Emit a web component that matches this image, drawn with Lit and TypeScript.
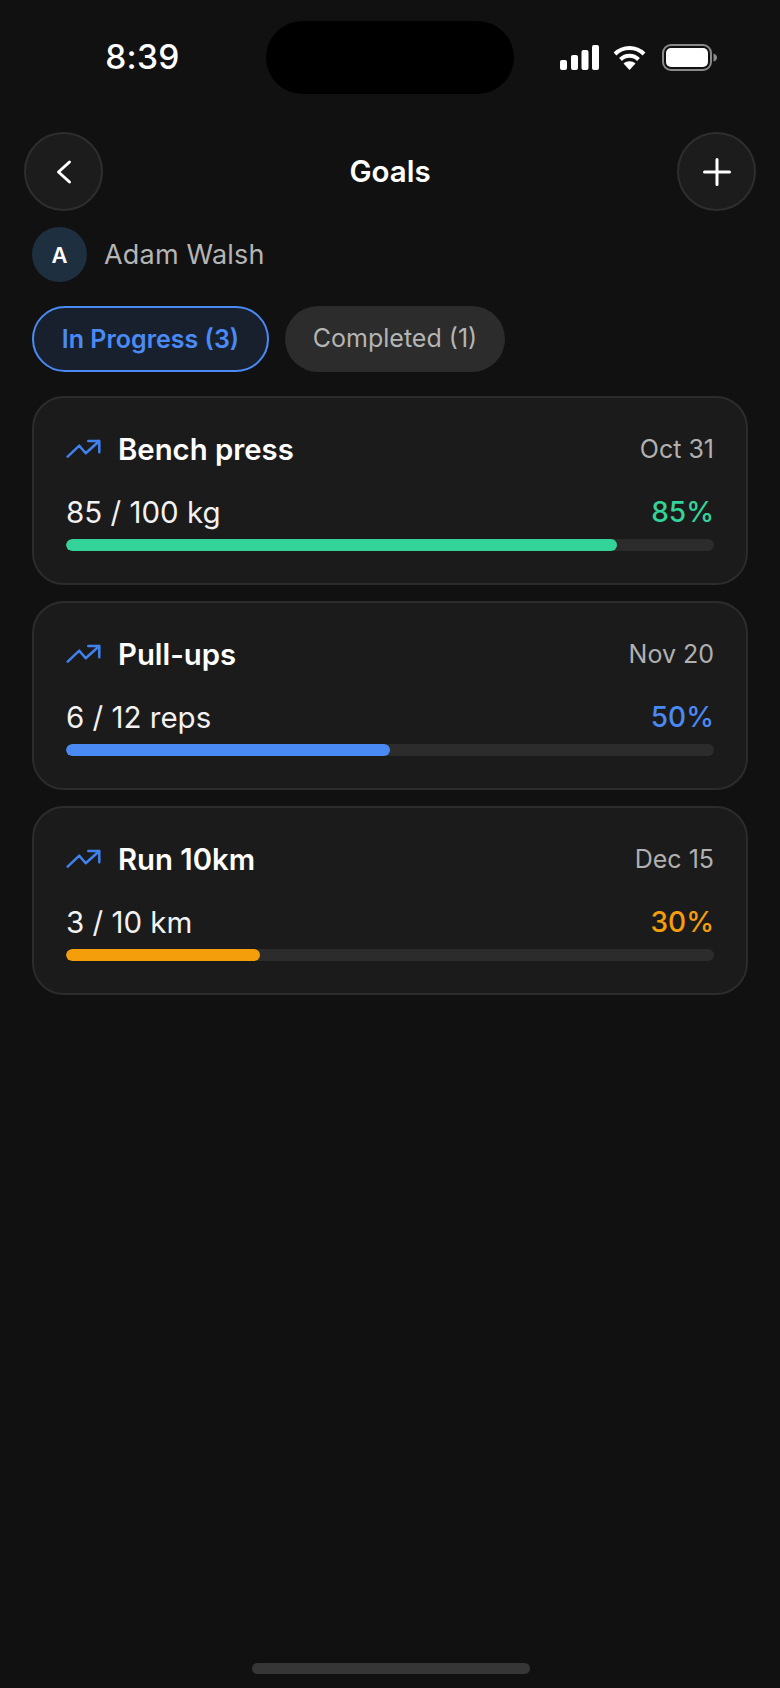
import { LitElement, html, css, svg } from "lit";
import { customElement } from "lit/decorators.js";

const goals = [
  { name: "Bench press", date: "Oct 31", value: "85 / 100 kg", pct: 85, color: "#34d399" },
  { name: "Pull-ups", date: "Nov 20", value: "6 / 12 reps", pct: 50, color: "#4a8af4" },
  { name: "Run 10km", date: "Dec 15", value: "3 / 10 km", pct: 30, color: "#f59e0b" },
];

const trend = svg`<path d="M1.7 19.7 L13.3 8.7 L19.7 16.3 L33.3 4 M22.3 4 H33.3 V15.3" fill="none" stroke="#3f82ee" stroke-width="2.5" stroke-linecap="round" stroke-linejoin="round"/>`;

@customElement("app-root")
export class AppRoot extends LitElement {
  static styles = css`
    :host { display: block; width: 780px; height: 1688px; background: #111111; color: #fff; font-family: Inter, "Liberation Sans", sans-serif; overflow: hidden; position: relative; }
    .status { height: 132px; display: grid; grid-template-columns: 266px 248px 266px; align-items: start; padding-top: 21px; box-sizing: border-box; }
    .time { font-size: 33.5px; font-weight: 500; line-height: 73px; text-align: center; padding-left: 19px; box-sizing: border-box; letter-spacing: 0.3px; }
    .island { height: 73px; background: #000; border-radius: 37px; }
    .sys { display: flex; align-items: center; height: 73px; padding-left: 46px; gap: 14px; }
    .sys svg { display: block; }
    .sys svg:last-child { margin-left: 2px; }
    .header { display: flex; justify-content: space-between; align-items: center; padding: 0 24px; }
    .round { width: 79px; height: 79px; box-sizing: border-box; border-radius: 50%; background: #1c1c1c; border: 2px solid #2e2e2e; display: flex; align-items: center; justify-content: center; }
    h1 { margin: 0 0 2px; font-size: 29.5px; font-weight: 600; }
    .user { display: flex; align-items: center; gap: 17px; padding: 16px 32px 0; }
    .avatar { width: 55px; height: 55px; border-radius: 50%; background: #1e2f40; display: flex; align-items: center; justify-content: center; font-size: 22px; font-weight: 600; }
    .uname { font-size: 27px; color: #b5b5b5; letter-spacing: 0.2px; }
    .tabs { display: flex; gap: 16px; padding: 24px 32px; }
    .tab { height: 66px; box-sizing: border-box; border-radius: 33px; display: flex; align-items: center; justify-content: center; font-size: 25px; }
    .tab.on { width: 237px; background: #18202e; border: 2px solid #4a8af4; color: #4a8af4; font-weight: 600; }
    .tab.off { width: 220px; background: #2c2c2c; color: #b5b5b5; padding-bottom: 3px; }
    .list { display: flex; flex-direction: column; gap: 16px; padding: 0 32px; }
    .card { height: 189px; box-sizing: border-box; background: #1b1b1b; border: 2px solid #2c2c2c; border-radius: 32px; padding: 32px 32px 0; display: flex; flex-direction: column; }
    .row { display: flex; justify-content: space-between; align-items: center; }
    .top { height: 38px; }
    .left { display: flex; align-items: center; gap: 17px; }
    .left svg { display: block; }
    .name { font-size: 29.3px; font-weight: 600; }
    .date { font-size: 25px; color: #b0b0b0; }
    .mid { height: 40px; margin-top: 24px; }
    .val { font-size: 29.5px; color: #f2f2f2; }
    .pct { font-size: 28px; font-weight: 500; }
    .track { height: 12px; margin-top: 7px; border-radius: 6px; background: #2c2c2c; overflow: hidden; }
    .fill { height: 100%; border-radius: 6px; }
    .home { position: absolute; left: 252px; top: 1663px; width: 278px; height: 11px; border-radius: 6px; background: #363636; }
  `;

  render() {
    return html`
      <div class="status">
        <div class="time">8:39</div>
        <div class="island"></div>
        <div class="sys">
          <svg width="39" height="25" viewBox="0 0 39 25" fill="#fff">
            <rect x="0" y="15" width="7" height="10" rx="2"/>
            <rect x="11" y="10" width="7" height="15" rx="2"/>
            <rect x="21.5" y="5" width="7" height="20" rx="2"/>
            <rect x="32" y="0" width="7" height="25" rx="2"/>
          </svg>
          <svg width="33" height="25" viewBox="0 0 33 25" fill="none" stroke="#fff" stroke-width="4">
            <path d="M2 9 C10 1 23 1 31 9"/>
            <path d="M7.5 14.5 C12.5 9.5 20.5 9.5 25.5 14.5"/>
            <path d="M16.5 25 L10.5 18.5 C14 15.5 19 15.5 22.5 18.5 Z" fill="#fff" stroke="none"/>
          </svg>
          <svg width="55" height="27" viewBox="0 0 55 27" fill="none">
            <rect x="1" y="1" width="48" height="25" rx="8" stroke="#8a8a8a" stroke-width="2"/>
            <rect x="4" y="4" width="42" height="19" rx="5" fill="#fff"/>
            <path d="M51.5 9.5 C54 10 55 12 55 13.5 C55 15 54 17 51.5 17.5 Z" fill="#8a8a8a"/>
          </svg>
        </div>
      </div>
      <div class="header">
        <div class="round">
          <svg width="18" height="26" viewBox="0 0 18 26" fill="none" stroke="#fff" stroke-width="3" stroke-linecap="round" stroke-linejoin="round"><path d="M14.5 3 L3.5 13 L14.5 23"/></svg>
        </div>
        <h1>Goals</h1>
        <div class="round">
          <svg width="28" height="28" viewBox="0 0 28 28" fill="none" stroke="#fff" stroke-width="3" stroke-linecap="round"><path d="M14 1.5 V26.5 M1.5 14 H26.5"/></svg>
        </div>
      </div>
      <div class="user">
        <div class="avatar">A</div>
        <div class="uname">Adam Walsh</div>
      </div>
      <div class="tabs">
        <div class="tab on">In Progress (3)</div>
        <div class="tab off">Completed (1)</div>
      </div>
      <div class="list">
        ${goals.map(
          (g) => html`
            <div class="card">
              <div class="row top">
                <div class="left">
                  <svg width="35" height="24" viewBox="0 0 35 24">${trend}</svg>
                  <span class="name">${g.name}</span>
                </div>
                <span class="date">${g.date}</span>
              </div>
              <div class="row mid">
                <span class="val">${g.value}</span>
                <span class="pct" style="color:${g.color}">${g.pct}%</span>
              </div>
              <div class="track"><div class="fill" style="width:${g.pct}%;background:${g.color}"></div></div>
            </div>
          `
        )}
      </div>
      <div class="home"></div>
    `;
  }
}
